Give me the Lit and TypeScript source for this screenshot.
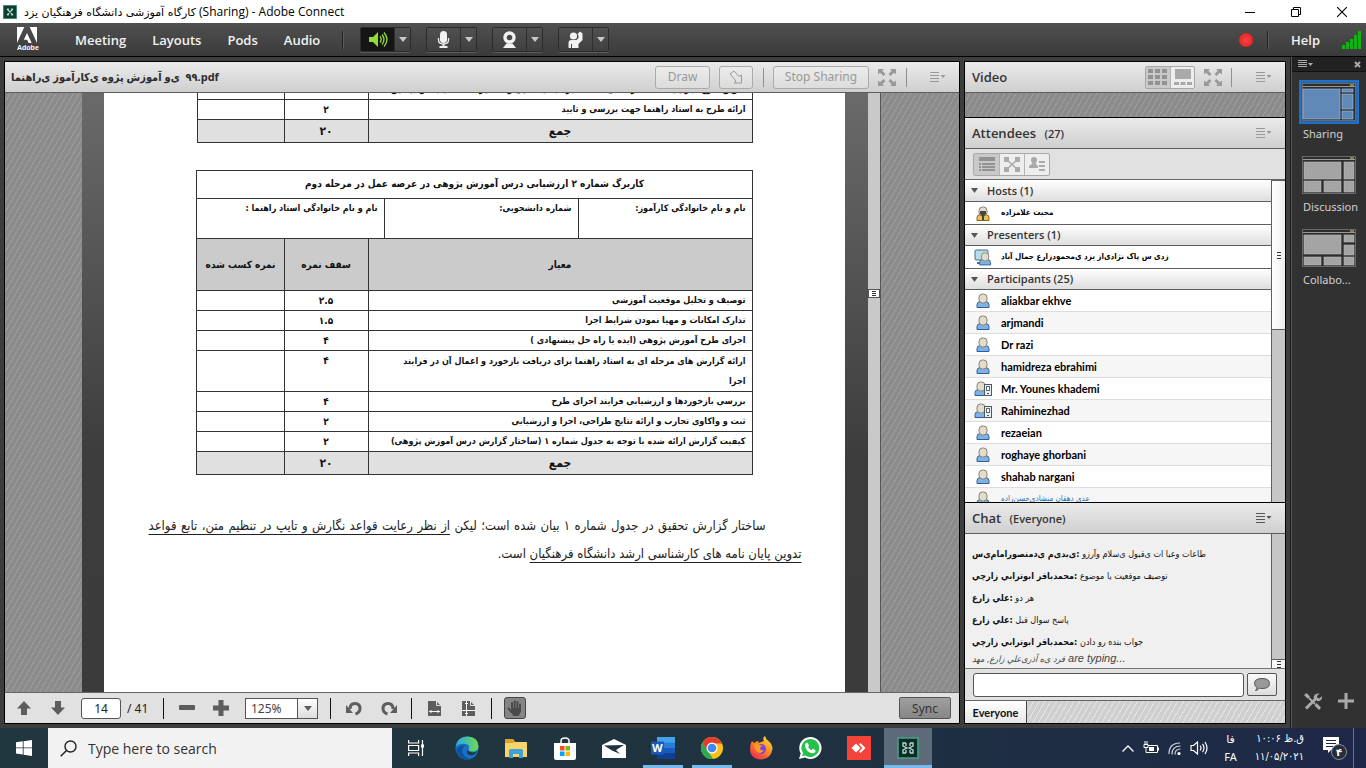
import { LitElement, html, svg, css, nothing, TemplateResult } from "lit";
import { customElement, property } from "lit/decorators.js";
import { classMap } from "lit/directives/class-map.js";

const LRM = "\u200E";
/* Words of a right-to-left script kept in left-to-right visual order. */
const ltrWords = (...words: string[]) => words.join(`${LRM} ${LRM}`);

const caret = html`<svg width="8" height="5" viewBox="0 0 8 5"><path d="M0 0h8L4 5z" fill="currentColor" /></svg>`;

const menuGlyph = html`<svg width="16" height="10" viewBox="0 0 16 10">
  <path d="M0 .5h9M0 3.500h9M0 6.500h9M0 9.500h9" stroke="currentColor" />
  <path d="M10.500 3h5L13 6z" fill="currentColor" />
</svg>`;

const fullGlyph = html`<svg width="18" height="17" viewBox="0 0 18 17" fill="currentColor">
  <path d="M0 0h6L4.300 1.700 7.500 5 5.500 7 2 3.700 0 5.600zM18 0v5.600l-2-1.900L12.500 7l-2-2 3.200-3.300L12 0zM0 17v-5.600l2 1.900L5.500 10l2 2-3.200 3.300L6 17zM18 17h-6l1.700-1.700-3.200-3.300 2-2 3.500 3.300 2-1.900z" />
</svg>`;

@customElement("tool-toggle")
class ToolToggle extends LitElement {
  @property() icon = "audio";
  @property({ type: Boolean }) on = false;

  static styles = css`
    :host { display: flex; height: 23px; border: 1px solid #2b2b2b; border-radius: 2px; box-shadow: 0 1px 0 #5a5a5a; }
    button { border: 0; padding: 0; margin: 0; display: flex; align-items: center; justify-content: center; background: linear-gradient(#505050, #404040); color: #f2f2f2; }
    .main { width: 33px; }
    .main.on { background: #151515; color: #8fdc3c; }
    .more { width: 16px; border-left: 1px solid #2e2e2e; color: #c8c8c8; }
  `;

  private glyph() {
    switch (this.icon) {
      case "audio":
        return svg`<path d="M1 6h4l5-5v15l-5-5H1z" fill="currentColor"/><path d="M12 5.500q2.500 3 0 6M14 3.500q4 5 0 10M16 1.500q6 7 0 14" fill="none" stroke="currentColor" stroke-width="1.300"/>`;
      case "mic":
        return svg`<rect x="6" y="0" width="7" height="12" rx="3.500" fill="currentColor"/><path d="M4.500 7v2q0 4 5 4t5-4V7" fill="none" stroke="currentColor" stroke-width="1.300"/><path d="M8.500 13h2v2h3v2h-8v-2h3z" fill="currentColor"/>`;
      case "camera":
        return svg`<circle cx="9.500" cy="6.500" r="4.500" fill="none" stroke="currentColor" stroke-width="3.400"/><path d="M6.500 12.500h6l3.500 4.500H3z" fill="currentColor"/>`;
      default:
        return svg`<circle cx="7.500" cy="5" r="3.600" fill="currentColor"/><path d="M2.500 17v-5q0-3 3-3h5l2-2V4.500L11.500 3 14 .5 16.500 2.500v6.500l-4 4v4z" fill="currentColor"/><path d="M5.500 13v4" stroke="#444"/>`;
    }
  }

  render() {
    return html`<button class=${classMap({ main: true, on: this.on })} aria-label=${this.icon}>
        <svg width="20" height="17" viewBox="0 0 20 17">${this.glyph()}</svg>
      </button>
      <button class="more" aria-label="${this.icon} options">${caret}</button>`;
  }
}

@customElement("person-icon")
class PersonIcon extends LitElement {
  @property() kind = "user";
  static styles = css`:host { display: flex; width: 18px; justify-content: center; } svg { display: block; }`;
  render() {
    const body = this.kind === "host" ? "#e9c25a" : "#7fb1e6";
    const edge = this.kind === "host" ? "#86641a" : "#2f6096";
    return html`<svg width="18" height="17" viewBox="0 0 18 17">
      ${this.kind === "presenter"
        ? svg`<rect x="1" y="1" width="13" height="10" rx="1" fill="#b7dcea" stroke="#4d6d80"/><path d="M3 14h8" stroke="#4d6d80" stroke-width="2"/>`
        : nothing}
      <g transform=${this.kind === "presenter" ? "translate(3 2) scale(.9)" : this.kind === "mobile" ? "translate(-2 0)" : ""}>
        <path d="M3 15.500v-3q0-2.500 3-3h6q3 .5 3 3v3z" fill=${body} stroke=${edge} />
        <rect x="5" y="2" width="8" height="9" rx="3.500" fill="#e2dccb" stroke="#8a8272" />
        ${this.kind === "host" ? svg`<path d="M6 6h6v3l-2 2v4H8v-4L6 9z" fill="#4a453b"/>` : nothing}
      </g>
      ${this.kind === "mobile"
        ? svg`<rect x="10.500" y="4.500" width="7" height="11" fill="#e8eef2" stroke="#4e5860"/><rect x="12.500" y="6.500" width="3" height="4" fill="#fff" stroke="#5b6c78"/><path d="M13 13.500h2" stroke="#4e5860"/>`
        : nothing}
    </svg>`;
  }
}

@customElement("share-pod")
class SharePod extends LitElement {
  static styles = css`
    :host { display: flex; flex-direction: column; min-width: 0; min-height: 0; border: 1px solid #000; background: #e1e1e1; font-family: "Noto Sans", "DejaVu Sans Condensed", sans-serif; }
    .head { flex: none; height: 30px; display: flex; align-items: center; background: linear-gradient(#ebebeb, #cfcfcf); border-bottom: 1px solid #5e5e5e; padding: 0 12px 0 6px; color: #999; }
    h2 { margin: 0; flex: 1; font: bold 11px/20px "Open Sans", "DejaVu Sans Condensed", sans-serif; color: #2b2b2b; white-space: nowrap; }
    .head button { height: 23px; border: 1px solid #ababab; border-radius: 3px; background: linear-gradient(#ececec, #dcdcdc); color: #999; font: 12px/20px "Noto Sans", sans-serif; padding: 0; display: flex; align-items: center; justify-content: center; }
    .head .draw { width: 55px; }
    .head .point { width: 34px; margin: 0 10px 0 9px; }
    .head .stop { width: 96px; margin: 0 9px; }
    .head .plain { border: 0; background: none; width: 18px; }
    .bar { width: 1px; height: 19px; background: #909090; }
    .head .plain + .bar { margin: 0 22px 0 10px; }
    .view { flex: 1; min-height: 0; display: flex; overflow: hidden; background: repeating-linear-gradient(120deg, #8b8b8b 0 4px, #9c9c9c 4px 5px); border-bottom: 1px solid #666; }
    .side { flex: 1 1 76px; }
    .side.right { flex-basis: 78px; }
    .desk { display: flex; background: linear-gradient(#6a6a6a, #3d3d3d 60%, #3b3b3b); padding: 0 23px 0 22px; }
    .paper { width: 653px; padding: 0 43px 0 45px; background: #fff; color: #111; direction: rtl; display: flex; flex-direction: column; }
    .track { width: 13px; background: #c9c9c9; border-right: 1px solid #555; box-sizing: border-box; display: flex; align-items: center; }
    .thumb { width: 12px; height: 9px; margin-bottom: 199px; box-sizing: border-box; background: #fff; border: 1px solid #555; display: flex; align-items: center; justify-content: center; }

    table { border-collapse: collapse; table-layout: fixed; width: 556px; margin-right: 49px; align-self: flex-start; font: bold 9px/20px "DejaVu Sans Condensed", sans-serif; color: #111; }
    td, th { border: 1px solid #333; padding: 0 6px; height: 19px; line-height: 19px; vertical-align: top; text-align: right; font-weight: bold; white-space: nowrap; }
    td.n { text-align: center; font-size: 10px; }
    .first { margin-top: -14px; }
    .second { margin-top: 27px; }
    tr.sum td { background: #e0e0e0; text-align: center; font-size: 12px; height: 22px; line-height: 22px; }
    tr.title th { height: 27px; line-height: 25px; text-align: center; font-size: 10px; }
    tr.names td { height: 39px; }
    tr.cols th { height: 51px; vertical-align: middle; text-align: center; background: #cbcbcb; font-size: 10px; }
    td.wrap { white-space: pre-line; line-height: 20px; height: 40px; }
    .c1 { width: 174px; } .c2 { width: 194px; } .c3 { width: 16px; } .c4 { width: 84px; } .c5 { width: 87px; }
    p { margin: 37px 0 0; font: 13px/28px "DejaVu Sans Condensed", sans-serif; text-indent: 36px; text-align: justify; color: #222; }
    u { text-underline-offset: 4px; text-decoration-thickness: 1px; }

    .foot { flex: none; height: 30px; display: flex; align-items: center; padding: 0 8px 0 9px; color: #5d5d5d; font-size: 12px; }
    .foot button { border: 0; background: none; padding: 0; display: flex; align-items: center; justify-content: center; color: inherit; width: 20px; height: 22px; }
    .foot .down { margin: 0 13px 0 14px; }
    .foot input { box-sizing: border-box; width: 40px; height: 21px; border: 1px solid #555; border-radius: 3px; text-align: center; font: 12px "Noto Sans", sans-serif; color: #222; padding: 0; background: #fff; }
    .of { width: 42px; padding-left: 6px; box-sizing: border-box; color: #222; }
    .sep { width: 1px; height: 21px; background: #111; }
    .foot .minus { margin: 0 14px 0 13px; }
    .zoom { display: flex; margin: 0 12px 0 14px; border: 1px solid #555; height: 19px; width: 71px; background: #fff; position: relative; }
    .zoom select { appearance: none; border: 0; background: none; width: 100%; padding: 0 0 0 5px; font: 12px "Noto Sans", sans-serif; color: #444; }
    .zoom span { position: absolute; right: 0; top: 0; bottom: 0; width: 19px; border-left: 1px solid #555; background: linear-gradient(#fff, #ddd); display: flex; align-items: center; justify-content: center; pointer-events: none; }
    .foot .undo { margin: 0 14px 0 13px; }
    .foot .redo { margin-right: 13px; }
    .foot .fit { margin: 0 14px 0 12px; }
    .foot .split { margin-right: 13px; }
    .foot .hand { margin-left: 12px; width: 22px; background: #858585; border: 1px solid #444; border-radius: 3px; color: #4a4a4a; }
    .foot .sync { margin-left: auto; width: 52px; background: linear-gradient(#a0a0a0, #868686); border: 1px solid #555; border-radius: 2px; font: 12px "Noto Sans", sans-serif; color: #333; }
  `;

  private row(text: string, score: string, wrap = false) {
    return html`<tr><td colspan="3" class=${wrap ? "wrap" : ""}>${text}</td><td class="n">${score}</td><td></td></tr>`;
  }

  render() {
    const cols = html`<colgroup><col class="c1" /><col class="c2" /><col class="c3" /><col class="c4" /><col class="c5" /></colgroup>`;
    const sum = html`<tr class="sum"><td colspan="3">جمع</td><td>۲۰</td><td></td></tr>`;
    return html`
      <div class="head">
        <h2>${ltrWords("ی\u200Cراهنما", "ی\u200Cکارآموز", "پژوه", "آموزش", "ی\u200Cو")} ${LRM} ۹۹.pdf</h2>
        <button class="draw">Draw</button>
        <button class="point" aria-label="Pointer"><svg width="14" height="14" viewBox="0 0 14 14"><path d="M1 4l4-3 5 5.500 2.500-1.500V13H5l2-2z" fill="none" stroke="currentColor" /></svg></button>
        <i class="bar"></i>
        <button class="stop">Stop Sharing</button>
        <button class="plain" aria-label="Full screen">${fullGlyph}</button>
        <i class="bar"></i>
        <button class="plain" aria-label="Pod options">${menuGlyph}</button>
      </div>
      <div class="view">
        <div class="side"></div>
        <div class="desk">
          <div class="paper">
            <table class="first">${cols}<tbody>
              ${this.row("تدوین طرح اجرایی: انتخاب راه حل مناسب بر مبنای تحلیل و تفسیر داده های بخش پیشین.", "")}
              ${this.row("ارائه طرح به استاد راهنما جهت بررسی و تایید", "۲")}
              ${sum}
            </tbody></table>
            <table class="second">${cols}<tbody>
              <tr class="title"><th colspan="5">کاربرگ شماره ۲ ارزشیابی درس آموزش پژوهی در عرصه عمل در مرحله دوم</th></tr>
              <tr class="names"><td>نام و نام خانوادگی کارآموز:</td><td>شماره دانشجویی:</td><td colspan="3">نام و نام خانوادگی استاد راهنما :</td></tr>
              <tr class="cols"><th colspan="3">معیار</th><th>سقف نمره</th><th>نمره کسب شده</th></tr>
              ${this.row("توصیف و تحلیل موقعیت آموزشی", "۲.۵")}
              ${this.row("تدارک امکانات و مهیا نمودن شرایط اجرا", "۱.۵")}
              ${this.row("اجرای طرح آموزش پژوهی (ایده یا راه حل پیشنهادی )", "۴")}
              ${this.row("ارائه گزارش های مرحله ای به استاد راهنما برای دریافت بازخورد و اعمال آن در فرایند\nاجرا", "۴", true)}
              ${this.row("بررسی بازخوردها و ارزشیابی فرایند اجرای طرح", "۴")}
              ${this.row("ثبت و واکاوی تجارب و ارائه نتایج طراحی، اجرا و ارزشیابی", "۲")}
              ${this.row("کیفیت گزارش ارائه شده با توجه به جدول شماره ۱ (ساختار گزارش درس آموزش پژوهی)", "۲")}
              ${sum}
            </tbody></table>
            <p>ساختار گزارش تحقیق در جدول شماره ۱ بیان شده است؛ لیکن <u>از نظر رعایت قواعد نگارش و تایپ در تنظیم متن، تابع قواعد تدوین پایان نامه های کارشناسی ارشد دانشگاه فرهنگیان</u> است.</p>
          </div>
        </div>
        <div class="track"><div class="thumb"><svg width="4" height="5" viewBox="0 0 4 5"><path d="M0 .5h4M0 2.500h4M0 4.500h4" stroke="#333" /></svg></div></div>
        <div class="side right"></div>
      </div>
      <div class="foot">
        <button class="up" aria-label="Previous page"><svg width="14" height="14" viewBox="0 0 14 14"><path d="M7 0l7 7.500h-4V14H4V7.500H0z" fill="currentColor" /></svg></button>
        <button class="down" aria-label="Next page"><svg width="14" height="14" viewBox="0 0 14 14"><path d="M7 14l7-7.500h-4V0H4v6.500H0z" fill="currentColor" /></svg></button>
        <input aria-label="Page" .value=${"14"} /><span class="of">/ 41</span>
        <i class="sep"></i>
        <button class="minus" aria-label="Zoom out"><svg width="16" height="6" viewBox="0 0 16 6"><rect width="16" height="5" rx="1" fill="currentColor" /></svg></button>
        <button aria-label="Zoom in"><svg width="16" height="16" viewBox="0 0 16 16"><path d="M5.500 0h5v5.500H16v5h-5.500V16h-5v-5.500H0v-5h5.500z" fill="currentColor" /></svg></button>
        <div class="zoom"><select aria-label="Zoom"><option>125%</option></select><span>${caret}</span></div>
        <i class="sep"></i>
        <button class="undo" aria-label="Undo"><svg width="17" height="15" viewBox="0 0 17 15"><path d="M4 8q0-5.500 5-5.500t5 5q0 4-4.500 5.500" fill="none" stroke="currentColor" stroke-width="3" /><path d="M0 4v8h7z" fill="currentColor" /></svg></button>
        <button class="redo" aria-label="Redo"><svg width="17" height="15" viewBox="0 0 17 15"><path d="M13 8q0-5.500-5-5.500t-5 5q0 4 4.500 5.500" fill="none" stroke="currentColor" stroke-width="3" /><path d="M17 4v8h-7z" fill="currentColor" /></svg></button>
        <i class="sep"></i>
        <button class="fit" aria-label="Fit width"><svg width="13" height="15" viewBox="0 0 13 15"><path d="M0 0h8l5 5v10H0z" fill="currentColor" /><path d="M8.500 0v4.500H13" fill="none" stroke="#e1e1e1" /><path d="M1 10.500h11M3 9v3M10 9v3" fill="none" stroke="#f4f4f4" /></svg></button>
        <button class="split" aria-label="Fit page"><svg width="13" height="15" viewBox="0 0 13 15"><path d="M0 0h8l5 5v10H0z" fill="currentColor" /><path d="M8.500 0v4.500H13" fill="none" stroke="#e1e1e1" /><path d="M0 9.500h13M4.500 0v15M3 2.500h3M3 12.500h3" fill="none" stroke="#f4f4f4" /></svg></button>
        <i class="sep"></i>
        <button class="hand" aria-label="Pan"><svg width="16" height="16" viewBox="0 0 16 16"><path d="M5 9V3M7.700 8V1.200M10.400 8V2M13 9V4.500M4.500 12L1.500 8.500" stroke="currentColor" stroke-width="2" stroke-linecap="round" /><path d="M4 8h10v3.500L11.500 16h-5L4 12.500z" fill="currentColor" /></svg></button>
        <button class="sync">Sync</button>
      </div>`;
  }
}

interface Person { name: string; kind: string; faint?: boolean; }

@customElement("side-pods")
class SidePods extends LitElement {
  static styles = css`
    :host { display: flex; flex-direction: column; min-height: 0; border: 1px solid #000; background: #e1e1e1; font-family: "Noto Sans", "DejaVu Sans", sans-serif; color: #333; }
    .head { flex: none; height: 30px; box-sizing: content-box; display: flex; align-items: center; background: linear-gradient(#ebebeb, #cfcfcf); border-bottom: 1px solid #5e5e5e; padding: 0 13px 0 7px; }
    h2 { margin: 0; flex: 1; font: 600 13px/20px "Open Sans", sans-serif; color: #333; }
    h2 small { font-size: 11px; margin-left: 5px; }
    button { border: 0; background: none; padding: 0; display: flex; align-items: center; justify-content: center; color: #999; }
    .head.dark > button { color: #555; }
    .bar { width: 1px; height: 19px; background: #909090; margin: 0 24px 0 9px; }
    .seg { display: flex; border: 1px solid #a8a8a8; border-radius: 2px; background: #eee; height: 23px; box-sizing: border-box; }
    .seg button { width: 24px; border-left: 1px solid #b5b5b5; color: #aaa; }
    .seg button:first-child { border-left: 0; background: #c9c9c9; color: #929292; }
    .head .seg { margin-right: 9px; width: 50px; }
    .stripe { flex: none; height: 24px; background: repeating-linear-gradient(120deg, #8b8b8b 0 4px, #9c9c9c 4px 5px); }
    .black { flex: none; height: 1px; background: #000; }
    .tools { flex: none; height: 30px; display: flex; align-items: center; padding-left: 8px; border-bottom: 1px solid #666; }
    .tools .seg button { width: 25px; }
    .people { flex: 1; min-height: 0; display: flex; overflow: hidden; }
    .list { flex: 1; overflow: hidden; background: #fff; }
    .list h3 { margin: 0; height: 21px; display: flex; align-items: center; gap: 9px; padding-left: 6px; background: linear-gradient(#fff, #dedede); border-bottom: 1px solid #5e5e5e; font: 600 11px/20px "Open Sans", sans-serif; color: #333; }
    .list h3:not(:first-child) { border-top: 1px solid #5e5e5e; height: 20px; }
    .list h3 svg { color: #555; }
    ul { margin: 0; padding: 0; list-style: none; }
    li { height: 21px; display: flex; align-items: center; gap: 9px; padding-left: 9px; border-bottom: 1px solid #ddd; font: bold 11px/20px Lato, "DejaVu Sans", sans-serif; color: #000; }
    li:nth-child(even) { background: #f6f6f6; }
    .solo li { border-bottom: 0; height: 22px; font: bold 8px/20px "DejaVu Sans Condensed", sans-serif; }
    li.faint { color: #2a6dad; font: 8px/20px "DejaVu Sans Condensed", sans-serif; }
    .track { width: 13px; background: #c6c6c6; border-left: 1px solid #5e5e5e; display: flex; flex-direction: column; }
    .thumb { background: linear-gradient(90deg, #fff, #eee); border: solid #5e5e5e; border-width: 1px 0; height: 46%; display: flex; align-items: center; justify-content: center; }
    .chat { flex: none; display: flex; flex-direction: column; border-top: 1px solid #000; }
    .log { height: 134px; display: flex; border-bottom: 1px solid #777; background: #f0f0f0; }
    .log .text { flex: 1; padding: 9px 0 0 7px; font: 9px/22px "DejaVu Sans Condensed", sans-serif; color: #111; white-space: nowrap; overflow: hidden; }
    .text div { height: 22px; }
    .text .typing { font: italic 11px/11px "Liberation Sans", sans-serif; color: #444; height: 12px; }
    .typing bdi { font: italic 9px/11px "DejaVu Sans Condensed", sans-serif; }
    .log .track { justify-content: flex-end; }
    .log .thumb { height: 8px; border-bottom: 0; }
    .send { height: 32px; display: flex; align-items: center; gap: 3px; padding: 0 8px; border-bottom: 1px solid #666; box-sizing: border-box; }
    .send input { flex: 1; min-width: 0; height: 24px; box-sizing: border-box; border: 1px solid #555; border-radius: 3px; background: #fff; }
    .send button { width: 30px; height: 23px; border: 1px solid #555; border-radius: 2px; background: linear-gradient(#fafafa, #ddd); }
    .tabs { height: 22px; display: flex; background: repeating-linear-gradient(120deg, #cfcfcf 0 4px, #e4e4e4 4px 5px); }
    .tabs button { width: 62px; background: linear-gradient(#fff, #e6e6e6); border-right: 1px solid #444; font: bold 11px Lato, sans-serif; color: #111; }
  `;

  private people: Person[] = [
    { name: "aliakbar ekhve", kind: "user" },
    { name: "arjmandi", kind: "user" },
    { name: "Dr razi", kind: "user" },
    { name: "hamidreza ebrahimi", kind: "user" },
    { name: "Mr. Younes khademi", kind: "mobile" },
    { name: "Rahiminezhad", kind: "mobile" },
    { name: "rezaeian", kind: "user" },
    { name: "roghaye ghorbani", kind: "user" },
    { name: "shahab nargani", kind: "user" },
    { name: "عدی دهقان منشادی\u200Cحسن\u200Cزاده", kind: "user", faint: true },
  ];

  private messages: [string, string][] = [
    ["ی\u200Cبدی\u200Cم ی\u200Cدمنصورامام\u200Cی\u200Cس", "طاعات وعبا ات ی\u200Cقبول ی\u200Cسلام وآرزو"],
    ["محمدباقر ابوترابي زارچي", "توصيف موقعيت يا موضوع"],
    ["علي زارع", "هر دو"],
    ["علي زارع", "پاسخ سوال قبل"],
    ["محمدباقر ابوترابي زارچي", "جواب بنده رو دادن"],
  ];

  private group(title: string, rows: Person[], solo = false): TemplateResult {
    return html`<h3><svg width="7" height="5" viewBox="0 0 7 5"><path d="M0 0h7L3.500 5z" fill="currentColor" /></svg>${title}</h3>
      <ul class=${solo ? "solo" : ""}>
        ${rows.map((p) => html`<li class=${p.faint ? "faint" : ""}><person-icon kind=${p.kind}></person-icon><bdi>${p.name}</bdi></li>`)}
      </ul>`;
  }

  render() {
    const grip = html`<svg width="4" height="7" viewBox="0 0 4 7"><path d="M0 .5h4M0 3.500h4M0 6.500h4" stroke="#333" /></svg>`;
    return html`
      <div class="head">
        <h2>Video</h2>
        <div class="seg">
          <button aria-label="Grid"><svg width="20" height="17" viewBox="0 0 20 17"><path d="M0 0h5v4H0zM7 0h5v4H7zM14 0h5v4h-5zM0 6h5v4H0zM7 6h5v4H7zM14 6h5v4h-5zM0 12h5v4H0zM7 12h5v4H7zM14 12h5v4h-5z" fill="currentColor" /></svg></button>
          <button aria-label="Filmstrip"><svg width="18" height="17" viewBox="0 0 18 17"><path d="M1 0h16v10H1zM0 13h5v3H0zM6.500 13h5v3h-5zM13 13h5v3h-5z" fill="currentColor" /></svg></button>
        </div>
        <button aria-label="Full screen">${fullGlyph}</button>
        <i class="bar"></i>
        <button aria-label="Video options">${menuGlyph}</button>
      </div>
      <div class="stripe"></div>
      <div class="black"></div>
      <div class="head">
        <h2>Attendees <small>(27)</small></h2>
        <button aria-label="Attendee options">${menuGlyph}</button>
      </div>
      <div class="tools">
        <div class="seg">
          <button aria-label="List"><svg width="16" height="15" viewBox="0 0 16 15" fill="currentColor"><path d="M0 0h16v4H0zM0 6h2v2H0zM3 6h13v2H3zM0 9h2v2H0zM3 9h13v2H3zM0 12h2v2H0zM3 12h13v2H3z" /></svg></button>
          <button aria-label="Rooms"><svg width="16" height="15" viewBox="0 0 16 15"><path d="M0 0h5v5H0zM11 0h5v5h-5zM0 10h5v5H0zM11 10h5v5h-5z" fill="currentColor" /><path d="M3 3l10 9M13 3L3 12" stroke="currentColor" stroke-width="1.500" /></svg></button>
          <button aria-label="Status"><svg width="16" height="15" viewBox="0 0 16 15" fill="currentColor"><path d="M5 0q3 0 3 3 0 2-1.500 3.500L9 9v2H0V9l3.500-2.500Q2 5 2 3q0-3 3-3zM10 4h6v2h-6zM10 8h6v2h-6zM10 12h6v2h-6z" /></svg></button>
        </div>
      </div>
      <div class="people">
        <div class="list">
          ${this.group("Hosts (1)", [{ name: "محبت غلامزاده", kind: "host" }], true)}
          ${this.group("Presenters (1)", [{ name: "زدی س پاک نژادی\u200Cاز یزد ی\u200Cمحمودزارع جمال آباد", kind: "presenter" }], true)}
          ${this.group("Participants (25)", this.people)}
        </div>
        <div class="track"><div class="thumb">${grip}</div></div>
      </div>
      <div class="chat">
        <div class="head dark">
          <h2>Chat <small>(Everyone)</small></h2>
          <button aria-label="Chat options">${menuGlyph}</button>
        </div>
        <div class="log">
          <div class="text">
            ${this.messages.map(([who, what]) => html`<div><b><bdi>${who}</bdi>:</b> <bdi>${what}</bdi></div>`)}
            <div class="typing"><bdi>فرد ی\u200Cه آذری\u200Cعلي زارع, مهد</bdi> are typing...</div>
          </div>
          <div class="track"><div class="thumb">${grip}</div></div>
        </div>
        <div class="send">
          <input aria-label="Message" />
          <button aria-label="Send"><svg width="16" height="13" viewBox="0 0 16 13"><path d="M8 .5q7.500 0 7.500 5T8 10.500q-1.500 0-2.500-.3Q4 12 1.500 12.500 3 11 3 9.500.5 8 .5 5.500.5.5 8 .5z" fill="#999" stroke="#555" /></svg></button>
        </div>
        <div class="tabs"><button>Everyone</button></div>
      </div>`;
  }
}

@customElement("layout-bar")
class LayoutBar extends LitElement {
  static styles = css`
    :host { display: flex; flex-direction: column; background: #313131; border-left: 1px solid #555; box-shadow: -1px 0 0 #1c1c1c; font: 11px/16px "Noto Sans", sans-serif; color: #d2d2d2; }
    .top { height: 14px; background: #222; border-bottom: 1px solid #111; display: flex; justify-content: space-between; align-items: center; padding: 0 5px 0 6px; color: #aaa; }
    button { border: 0; background: none; padding: 0; color: inherit; font: inherit; text-align: left; display: flex; }
    .items { flex: 1; display: flex; flex-direction: column; padding: 8px 7px 0; }
    .item { flex-direction: column; height: 73px; }
    .item svg { display: block; }
    .item span { padding-left: 4px; margin-top: 2px; }
    .tools { display: flex; justify-content: space-between; padding: 0 12px 18px; color: #aaa; }
  `;

  private thumb(cells: [number, number, number, number][], active = false) {
    return html`<svg width="60" height="44" viewBox="0 0 60 44">
      ${active ? svg`<rect x="1" y="1" width="58" height="42" fill="#2f5480" stroke="#1f70c8" stroke-width="3"/>` : nothing}
      <rect x="3.500" y="3.500" width="53" height="37" fill="#2d2d2d" stroke="#6a6a6a" />
      <path d="M4 6.500h52" stroke="#999" /><path d="M51 5h4" stroke="#e8d080" />
      ${cells.map(([x, y, w, h]) => svg`<rect x=${x} y=${y} width=${w} height=${h} fill=${active ? "#6189b8" : "#a4a4a4"} stroke=${active ? "#a4c4e8" : "#bbb"} stroke-width=".6"/>`)}
    </svg>`;
  }

  render() {
    return html`
      <div class="top">
        <svg width="15" height="8" viewBox="0 0 15 8"><path d="M0 .5h9M0 2.500h9M0 4.500h9M0 6.500h9" stroke="currentColor" /><path d="M10 3h5l-2.500 3z" fill="currentColor" /></svg>
        <svg width="7" height="7" viewBox="0 0 7 7"><path d="M1 1l5 5M6 1L1 6" stroke="currentColor" stroke-width="2" /></svg>
      </div>
      <div class="items">
        <button class="item">${this.thumb([[4, 9, 37, 30], [43, 9, 11, 3], [43, 14, 11, 15], [43, 31, 11, 8]], true)}<span>Sharing</span></button>
        <button class="item">${this.thumb([[5, 9, 37, 17], [45, 9, 10, 17], [5, 28, 17, 11], [25, 28, 17, 11], [45, 28, 10, 11]])}<span>Discussion</span></button>
        <button class="item">${this.thumb([[5, 9, 37, 19], [45, 9, 10, 7], [45, 19, 10, 10], [5, 31, 17, 8], [25, 31, 17, 8], [45, 31, 10, 8]])}<span>Collabo...</span></button>
      </div>
      <div class="tools">
        <button aria-label="Tools"><svg width="18" height="17" viewBox="0 0 18 17"><path d="M2 15.500L12.500 5" stroke="currentColor" stroke-width="3" /><path d="M5 5l6 6" stroke="currentColor" stroke-width="1.800" /><path d="M0 2l2.500-2L6 3.500 4 6zM10.500 12.500l2-2.500 4.500 4.500-2 2.500zM15.500.5L13 3l.5 2 2 .5L18 3q.5 5-4.500 5.200L9.500 4.500Q10.500 0 15.500.5z" fill="currentColor" /></svg></button>
        <button aria-label="Add"><svg width="16" height="16" viewBox="0 0 16 16"><path d="M8 0v16M0 8h16" stroke="currentColor" stroke-width="3" /></svg></button>
      </div>`;
  }
}

@customElement("task-bar")
class TaskBar extends LitElement {
  static styles = css`
    :host { display: flex; height: 40px; background: linear-gradient(90deg, #21373f, #20343f 45%, #1d2847); color: #fff; font: 12px/18px "Noto Sans", "DejaVu Sans", sans-serif; }
    button { border: 0; background: none; color: inherit; padding: 0; width: 48px; display: flex; align-items: center; justify-content: center; border-bottom: 3px solid transparent; border-top: 3px solid transparent; background-clip: padding-box; }
    .search { flex: 0 1 344px; display: flex; align-items: center; gap: 11px; background: #f2f2f2; padding-left: 12px; box-sizing: border-box; color: #222; }
    .search input { border: 0; background: none; flex: 1; min-width: 0; padding: 0; font: 14px "Open Sans", sans-serif; }
    .search input::placeholder { color: #333; opacity: 1; }
    .apps { display: flex; gap: 1px; }
    .apps button:first-child { margin-right: 2px; }
    .apps .run { margin: 0 4px; width: 40px; border-bottom-color: #76b9ed; }
    .apps .active { background: #5c6a79; border-top: 0; padding-top: 3px; border-bottom-color: #76b9ed; }
    .tray { margin-left: auto; display: flex; align-items: center; }
    .tray svg { display: block; }
    .icons { display: flex; align-items: center; gap: 9px; margin-right: 16px; }
    .two { text-align: center; font-size: 11px; }
    .clock { margin: 0 18px; direction: rtl; text-align: right; font: 11px/18px "DejaVu Sans Condensed", sans-serif; }
    .notice { margin-right: 12px; padding-right: 5px; border-right: 1px solid #6a738a; height: 40px; display: flex; align-items: center; }
    text { font: bold 10px "DejaVu Sans", sans-serif; }
    .w { font: bold 11px "Open Sans", sans-serif; }
  `;

  render() {
    return html`
      <button aria-label="Start"><svg width="16" height="16" viewBox="0 0 16 16"><path d="M0 2.300L6.800 1.300v6.200H0zM7.600 1.200L16 0v7.500H7.600zM0 8.300h6.800v6.300L0 13.600zM7.600 8.300H16V16l-8.400-1.200z" fill="#fff" /></svg></button>
      <label class="search"><svg width="17" height="17" viewBox="0 0 17 17"><circle cx="10.500" cy="6.500" r="5.500" fill="none" stroke="#222" stroke-width="1.400" /><path d="M6.500 10.500L.7 16.300" stroke="#222" stroke-width="1.500" /></svg><input placeholder="Type here to search" aria-label="Search" /></label>
      <div class="apps">
        <button aria-label="Task view"><svg width="17" height="16" viewBox="0 0 17 16" fill="none" stroke="#fff" stroke-width="1.200"><path d="M.6 0v3h10V0M.6 16v-3h10v3M.6 5.500h10v5H.6zM14.500 0v16" /><path d="M13 4.500h3v3h-3z" fill="#fff" stroke="none" /></svg></button>
        <button aria-label="Edge"><svg width="24" height="24" viewBox="0 0 24 24"><defs><linearGradient id="e1" x1="0" x2="1"><stop offset="0" stop-color="#2aa7e6" /><stop offset="1" stop-color="#6bdc4e" /></linearGradient></defs><circle cx="12" cy="12" r="11.500" fill="#1672c8" /><path d="M.6 11Q2 .5 12.500.5 23.500 1 23.500 10.500q-.5 5-6 5-5 0-4-2.500 2-4-2.500-5Q4 7 .6 11z" fill="url(#e1)" /><path d="M11 8.500q-5 3-3 9 3 6 10 5Q6 26 1.500 16 0 10 11 8.500z" fill="#1152a0" /><path d="M13.500 13q-1 3 4 3.500 3 0 5-1.500-3 5-8 4-4.500-2-1-6z" fill="#21363f" /></svg></button>
        <button aria-label="Explorer"><svg width="22" height="19" viewBox="0 0 22 19"><path d="M0 1q0-1 1-1h7l2 3h11q1 0 1 1v14H0z" fill="#f8d56a" /><path d="M0 4V1q0-1 1-1h7l2 3-2 1z" fill="#dca32c" /><path d="M4 19v-7q0-2 2-2h10q2 0 2 2v7h-4v-4H8v4z" fill="#3f9fd8" /></svg></button>
        <button aria-label="Store"><svg width="22" height="23" viewBox="0 0 22 23"><path d="M7 7V4q0-3 4-3t4 3v3" fill="none" stroke="#fff" stroke-width="1.500" /><path d="M0 6h22v15q0 2-2 2H2q-2 0-2-2z" fill="#fff" /><path d="M6 9h4.500v4.500H6z" fill="#f25022" /><path d="M11.500 9H16v4.500h-4.500z" fill="#7fba00" /><path d="M6 14.500h4.500V19H6z" fill="#00a4ef" /><path d="M11.500 14.500H16V19h-4.500z" fill="#ffb900" /></svg></button>
        <button aria-label="Mail"><svg width="24" height="19" viewBox="0 0 24 19"><path d="M0 6l12-6 12 6v13H0z" fill="#fff" /><path d="M2 6.500l20-.5-8 5 4 4-8-3.500z" fill="#20343f" /></svg></button>
        <button class="run" aria-label="Word"><svg width="24" height="22" viewBox="0 0 24 22"><path d="M6 0h18v6H6z" fill="#41a5ee" /><path d="M6 5.500h18V11H6z" fill="#2b7cd3" /><path d="M6 11h18v5.500H6z" fill="#185abd" /><path d="M6 16.500h18V22H6z" fill="#103f91" /><rect y="4.500" width="13" height="13" rx="1" fill="#185abd" /><text class="w" x="1" y="15" fill="#fff">W</text></svg></button>
        <button class="run" aria-label="Chrome"><svg width="24" height="24" viewBox="0 0 24 24"><circle cx="12" cy="12" r="11" fill="#fbc116" /><path d="M2.500 6.500L8 15l5 8A11 11 0 0 1 2.500 6.500z" fill="#2da94f" /><path d="M2.500 6.500L7 14l5-6.500h10Q18.500 1 12 1 6 1 2.500 6.500z" fill="#e33b2e" /><circle cx="12" cy="12" r="5.500" fill="#fff" /><circle cx="12" cy="12" r="4.300" fill="#4285f4" /></svg></button>
        <button aria-label="Firefox"><svg width="24" height="24" viewBox="0 0 24 24"><defs><linearGradient id="f1" x1=".9" y1="0" x2=".2" y2="1"><stop offset="0" stop-color="#ffe03a" /><stop offset=".5" stop-color="#ff8a1e" /><stop offset="1" stop-color="#f0245c" /></linearGradient></defs><path d="M3 5l2 2q2-2 5-2-1 1-1 2l6-2q-2-3 1-5 1 4 4 5.500 3.500 3 3.500 7.500Q22 23 12 23.500 1 23 1 12.500 1 8 3 5z" fill="url(#f1)" /><circle cx="12" cy="13" r="5" fill="#7542e5" /><path d="M5 9q4-2 6 0l3 1q-2 0-3 2 0 3 4 2-3 5-7 2-3-3-3-7z" fill="#ff9a22" /></svg></button>
        <button aria-label="WhatsApp"><svg width="24" height="24" viewBox="0 0 24 24"><path d="M12 1a11 11 0 1 1-5 20.500L1 23l1.700-5.500A11 11 0 0 1 12 1z" fill="#fff" /><path d="M12 3a9 9 0 1 1-4.700 16.500L4 20.300 5 17A9 9 0 0 1 12 3z" fill="#27c04b" /><path d="M8 7l1.700-.3 1.300 3-1 1.300q1.300 2.300 3.500 3.300l1.300-1.500 2.700 1.400q.2 2.600-2.500 3Q8.500 17 7 10q0-2 1-3z" fill="#fff" /></svg></button>
        <button aria-label="AnyDesk"><svg width="24" height="24" viewBox="0 0 24 24"><path d="M0 0h24v24H0z" fill="#f4443a" /><path d="M4.500 12L9 7.500l4.500 4.500L9 16.500z" fill="#fff" /><path d="M12 8.500l1.500-1.500 5 5-5 5-1.500-1.500 3.500-3.500z" fill="#fff" /></svg></button>
        <button class="active" aria-label="Connect"><svg width="22" height="22" viewBox="0 0 22 22"><path d="M1 1h20v20H1z" fill="#0b2d25" stroke="#49a083" stroke-width="1.600" /><path d="M9 6H6v3l4 2-4 2v3h3M13 6h3v3l-4 2 4 2v3h-3M9 6v3M13 6v3M9 16v-3M13 16v-3" fill="none" stroke="#b8dccf" stroke-width="1.300" /></svg></button>
      </div>
      <div class="tray">
        <div class="icons">
          <svg width="12" height="7" viewBox="0 0 12 7"><path d="M.5 6.500L6 1l5.500 5.500" fill="none" stroke="#fff" stroke-width="1.300" /></svg>
          <svg width="16" height="14" viewBox="0 0 16 14"><path d="M5 4.500h9.500v7H5M15.500 6.500v3M1 3.500h4v3H1zM2 0v3M4 0v3M3 7v4.500h3" fill="none" stroke="#fff" /><path d="M6 6h5v4H6z" fill="#fff" /></svg>
          <svg width="13" height="13" viewBox="0 0 13 13"><path d="M1 12Q1 1 12 1M4 12.500Q4 4 12.500 4M7 12.500Q7 7 12.500 7" fill="none" stroke="#cfd5dd" stroke-width="1.200" /><circle cx="11" cy="11.500" r="1.600" fill="#fff" /></svg>
          <svg width="18" height="14" viewBox="0 0 18 14" fill="none" stroke="#fff" stroke-width="1.200"><path d="M1 4.500h2.500L7.500 1v12L3.500 9.500H1zM10 4.500q2 2.500 0 5M12.500 2.800q3 4.200 0 8.400M15 1q4 6 0 12" /></svg>
        </div>
        <div class="two">فا<br />FA</div>
        <div class="clock">ق.ظ ۱۰:۰۶<br /><bdi dir="ltr">۱۱/۰۵/۲۰۲۱</bdi></div>
        <div class="notice"><svg width="26" height="26" viewBox="0 0 26 26"><path d="M1 2h16v13H9l-3 3v-3H1z" fill="#fff" /><path d="M4 5.500h10M4 8.500h10M4 11.500h7" stroke="#1d2847" /><circle cx="17" cy="17" r="7.500" fill="#262c38" stroke="#8a8f99" /><text x="14" y="21" fill="#fff">۴</text></svg></div>
      </div>`;
  }
}

@customElement("app-root")
class AppRoot extends LitElement {
  static styles = css`
    :host { display: grid; grid-template-rows: 23px 34px minmax(0, 1fr) 40px; height: 100vh; background: #3d3d3d; overflow: hidden; font-family: "Noto Sans", "DejaVu Sans", sans-serif; }
    .title { display: flex; align-items: center; gap: 7px; background: #fff; padding: 0 19px 0 3px; color: #000; font: 12px/22px "Open Sans", "DejaVu Sans", sans-serif; }
    .title h1 { margin: 0; flex: 1; font: inherit; white-space: nowrap; }
    .title bdi { font: 11px "DejaVu Sans", sans-serif; }
    .wins { display: flex; gap: 36px; align-items: center; }
    button { border: 0; background: none; padding: 0; color: inherit; font: inherit; display: flex; }
    .menu { display: flex; align-items: center; background: linear-gradient(#505050, #3a3a3a); border-bottom: 1px solid #000; color: #fff; font: 600 13px/20px "Open Sans", sans-serif; }
    .logo { margin: 0 38px 0 17px; text-align: center; font: bold 7px/8px "Liberation Sans", sans-serif; width: 20px; }
    .logo svg { display: block; margin: 0 auto 1px; }
    nav { display: flex; gap: 26px; }
    nav a, .help { color: #f2f2f2; text-decoration: none; }
    .sep { width: 1px; height: 18px; background: #222; border-right: 1px solid #5a5a5a; }
    nav + .sep { margin: 0 16px 0 22px; }
    .toggles { display: flex; gap: 15px; flex: 1; }
    .rec { width: 14px; height: 14px; border-radius: 7px; background: radial-gradient(#ff4444, #d81818); margin-right: 14px; }
    .help { margin: 0 22px; }
    .bars { margin-right: 4px; display: block; }
    .work { display: grid; grid-template-columns: minmax(0, 1fr) auto 75px; min-height: 0; }
    share-pod { margin: 4px; }
    side-pods { margin: 4px 5px 4px 0; width: 320px; }
  `;

  render() {
    return html`
      <header class="title">
        <svg width="14" height="14" viewBox="0 0 14 14"><path d="M.5.5h13v13H.5z" fill="#0e3d31" stroke="#3b8a72" /><path d="M4 4l6 6M10 4l-6 6M4 4h2M10 4H8M4 10h2M10 10H8" stroke="#b8dccf" stroke-width="1.200" /></svg>
        <h1><bdi>کارگاه آموزشی دانشگاه فرهنگیان یزد</bdi> (Sharing) - Adobe Connect</h1>
        <div class="wins">
          <button aria-label="Minimize"><svg width="10" height="10" viewBox="0 0 10 10"><path d="M0 5.500h10" stroke="#000" /></svg></button>
          <button aria-label="Restore"><svg width="10" height="10" viewBox="0 0 10 10"><path d="M.5 2.500h7v7h-7zM2.500 2.500v-2h7v7h-2" fill="none" stroke="#000" /></svg></button>
          <button aria-label="Close"><svg width="10" height="10" viewBox="0 0 10 10"><path d="M0 0l10 10M10 0L0 10" stroke="#000" stroke-width="1.100" /></svg></button>
        </div>
      </header>
      <div class="menu">
        <div class="logo"><svg width="20" height="16" viewBox="0 0 20 16"><path d="M0 0h7.300L0 16zM12.700 0H20v16zM10 5.900l4.700 10.100h-3.100l-1.400-3.200H6.800z" fill="#fff" /></svg>Adobe</div>
        <nav><a href="#">Meeting</a><a href="#">Layouts</a><a href="#">Pods</a><a href="#">Audio</a></nav>
        <i class="sep"></i>
        <div class="toggles">
          <tool-toggle icon="audio" on></tool-toggle>
          <tool-toggle icon="mic"></tool-toggle>
          <tool-toggle icon="camera"></tool-toggle>
          <tool-toggle icon="hand"></tool-toggle>
        </div>
        <i class="rec"></i><i class="sep"></i>
        <a class="help" href="#">Help</a>
        <svg class="bars" width="20" height="18" viewBox="0 0 20 18"><path d="M0 14h3v4H0zM4 11h3v7H4zM8 8h3v10H8zM12 4h3v14h-3zM16 0h3v18h-3z" fill="#12b212" /></svg>
      </div>
      <main class="work">
        <share-pod></share-pod>
        <side-pods></side-pods>
        <layout-bar></layout-bar>
      </main>
      <task-bar></task-bar>`;
  }
}
